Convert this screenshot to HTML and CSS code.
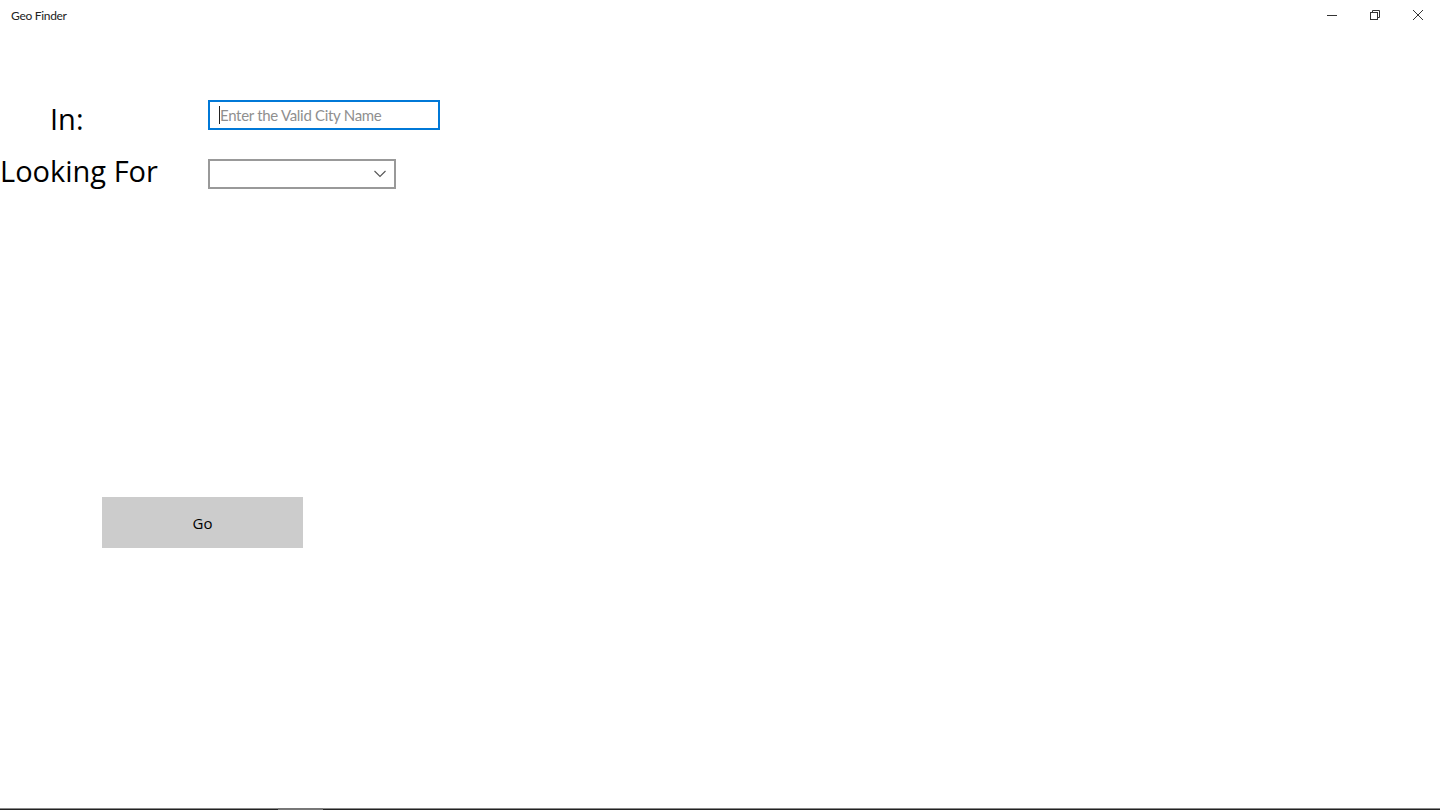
FILE: index.html
```html
<!doctype html>
<html lang="en">
<head>
<meta charset="utf-8">
<title>Geo Finder</title>
<link rel="stylesheet" href="styles.css">
</head>
<body>

<div class="window">
  <header class="titlebar">
    <span class="app-title">Geo Finder</span>
    <div class="caption">
      <span class="cap-btn" title="Minimize">
        <svg width="10" height="10" viewBox="0 0 10 10"><path d="M0 5.5h10" stroke="#333" stroke-width="1"/></svg>
      </span>
      <span class="cap-btn" title="Restore">
        <svg width="10" height="10" viewBox="0 0 10 10" fill="none" stroke="#333" stroke-width="1"><rect x="0.5" y="2.5" width="7" height="7"/><path d="M2.5 2.5v-2h7v7h-2"/></svg>
      </span>
      <span class="cap-btn" title="Close">
        <svg width="10" height="10" viewBox="0 0 10 10" fill="none" stroke="#333" stroke-width="1"><path d="M0 0l10 10M10 0l-10 10"/></svg>
      </span>
    </div>
  </header>

  <main class="content">
    <div class="form">
      <label class="lbl lbl-in" for="city">In:</label>
      <div class="field">
        <input id="city" class="textbox" type="text" placeholder="Enter the Valid City Name">
        <span class="caret"></span>
      </div>

      <label class="lbl lbl-for">Looking For</label>
      <div class="combo">
        <svg width="12" height="8" viewBox="0 0 12 8" fill="none" stroke="#555" stroke-width="1.1"><path d="M0.5 1l5.5 5.5 5.5-5.5"/></svg>
      </div>
    </div>

    <button class="go">Go</button>
  </main>

  <div class="taskbar"><span class="thumb"></span></div>
</div>

</body>
</html>
```

FILE: styles.css
```css
*{box-sizing:border-box;}
body{margin:0;font-family:"Open Sans","Noto Sans",Arial,sans-serif;background:#fff;color:#000;}
.window{width:1440px;height:810px;display:flex;flex-direction:column;overflow:hidden;}

/* title bar */
.titlebar{height:32px;flex:none;display:flex;align-items:center;justify-content:space-between;}
.app-title{padding-left:11px;font:12px Lato,"Open Sans",sans-serif;letter-spacing:-.3px;color:#222;margin-top:-2px;}
.caption{display:flex;height:100%;}
.cap-btn{width:43px;height:30px;display:flex;align-items:center;justify-content:center;}
.caption .cap-btn:last-child{width:44px;}

/* form */
.content{flex:1;display:flex;flex-direction:column;}
.form{display:grid;grid-template-columns:208px auto;grid-template-rows:30px 30px;row-gap:29px;margin-top:68px;align-items:center;justify-items:start;}
.lbl{font-size:29px;line-height:30px;white-space:nowrap;}
.lbl-in{padding-left:50px;margin-top:8px;}
.lbl-for{margin-top:-6px;}
.field{position:relative;}
.textbox{width:232px;height:30px;border:2px solid #0078d7;padding:0 10px;font:15px Lato,"Open Sans",sans-serif;letter-spacing:-.3px;color:#000;outline:none;}
.textbox::placeholder{color:#8f8f8f;}
.caret{position:absolute;left:11px;top:6px;width:1px;height:18px;background:#222;}
.combo{width:188px;height:30px;border:2px solid #999;display:flex;align-items:center;justify-content:flex-end;padding-right:8px;}

.go{margin:308px 0 0 102px;width:201px;height:51px;border:0;background:#ccc;font:15px "Open Sans","Noto Sans",Arial,sans-serif;color:#000;padding:0;}

/* bottom edge */
.taskbar{height:2px;flex:none;margin-top:auto;background:#222;border-top:1px solid #888;position:relative;}
.thumb{position:absolute;left:278px;top:-1px;width:45px;height:2px;background:#777;}
```
